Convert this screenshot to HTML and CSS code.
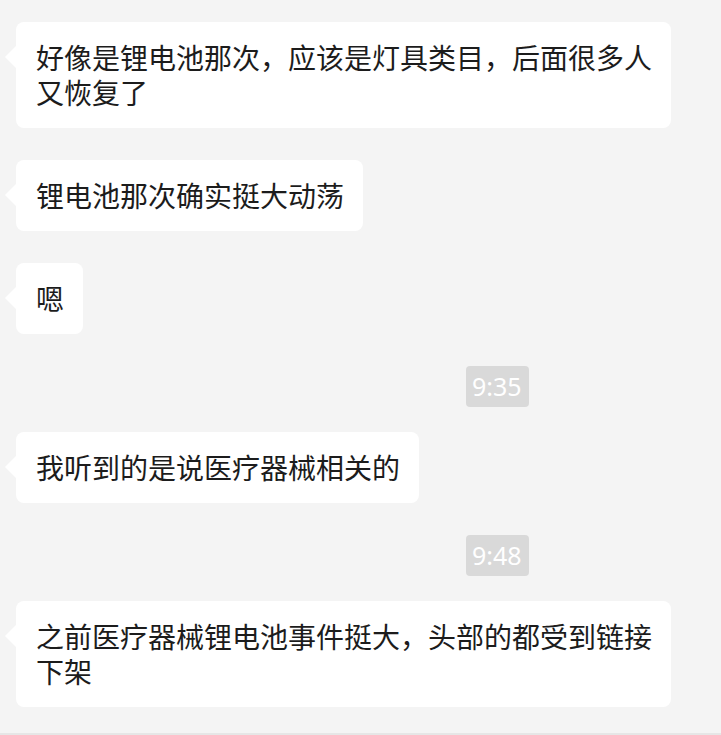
FILE: index.html
```html
<!DOCTYPE html>
<html lang="zh-CN">
<head>
    <meta charset="UTF-8">
    <meta name="viewport" content="width=device-width, initial-scale=1.0">
    <title>聊天记录</title>
    <link rel="stylesheet" href="styles.css">
</head>
<body>

    <div class="chat">
        <!-- messages -->
        <div class="msg">
            <div class="bubble">好像是锂电池那次，应该是灯具类目，后面很多人又恢复了</div>
        </div>
        <div class="msg">
            <div class="bubble">锂电池那次确实挺大动荡</div>
        </div>
        <div class="msg">
            <div class="bubble">嗯</div>
        </div>

        <div class="time"><span>9:35</span></div>

        <div class="msg">
            <div class="bubble">我听到的是说医疗器械相关的</div>
        </div>

        <div class="time"><span>9:48</span></div>

        <div class="msg">
            <div class="bubble">之前医疗器械锂电池事件挺大，头部的都受到链接下架</div>
        </div>
    </div>

</body>
</html>
```

FILE: styles.css
```css
html, body {
    margin: 0;
    padding: 0;
    height: 100%;
}
body {
    background: #f4f4f4;
    font-family: "Noto Sans CJK SC", "Noto Sans", sans-serif;
    color: #1c1c1c;
    overflow: hidden;
}
.chat {
    box-sizing: border-box;
    height: 735px;
    padding: 22px 0 0 16px;
    border-bottom: 2px solid #e6e6e6;
}
.msg {
    display: flex;
    margin-bottom: 32px;
}
.bubble {
    position: relative;
    max-width: 616px;
    padding: 18px 19px 18px 20px;
    background: #fff;
    border-radius: 8px;
    font-size: 28px;
    line-height: 35px;
}
.bubble::before {
    content: "";
    position: absolute;
    left: -11px;
    top: 24px;
    border-top: 11px solid transparent;
    border-bottom: 11px solid transparent;
    border-right: 11px solid #fff;
}
.time {
    display: flex;
    margin: 3px 0 25px 450px;
}
.time span {
    height: 41px;
    padding: 0 7px 0 6px;
    background: #d9d9d9;
    border-radius: 4px;
    color: #fff;
    font-family: "Noto Sans", sans-serif;
    font-size: 25px;
    line-height: 41px;
}
```
